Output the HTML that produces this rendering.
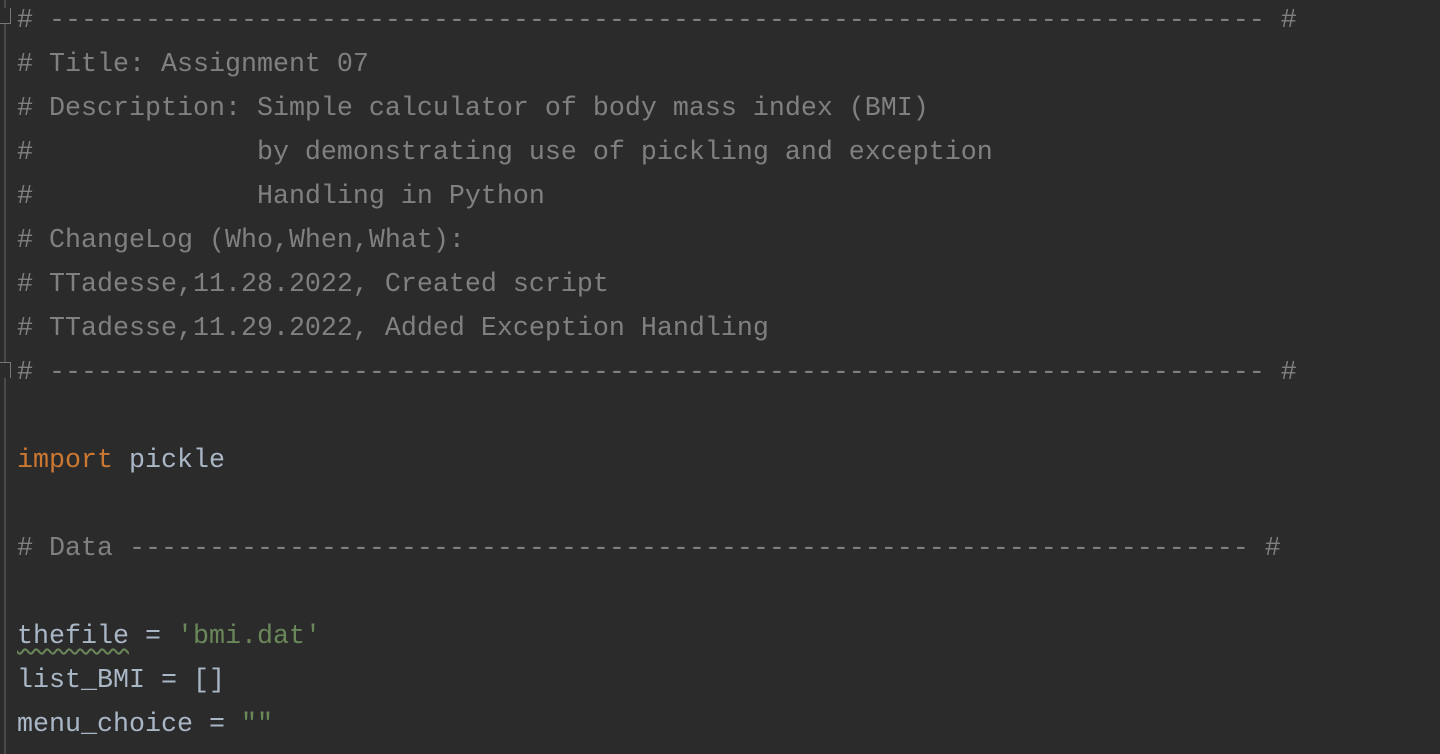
<!DOCTYPE html>
<html><head><style>
html,body{margin:0;padding:0;background:#2b2b2b;width:1440px;height:754px;overflow:hidden}
.g{position:absolute;left:4px;top:0;width:2px;height:754px;background:#4a4a4a}
pre{position:absolute;left:17px;top:-1px;margin:0;font-family:"Liberation Mono",monospace;font-size:26.67px;line-height:44px;color:#a9b7c6}
.c{color:#808080}.k{color:#cc7832}.s{color:#6a8759}
.w{text-decoration:underline wavy #6a8759;text-decoration-thickness:1.5px;text-underline-offset:5px}
.f{position:absolute;left:-1px;width:12px;height:16px;background:#2b2b2b;border:1.5px solid #777;box-sizing:border-box}
</style></head><body>
<div class="g"></div>
<div class="f" style="top:8px;border-top:none"></div>
<div class="f" style="top:362px;border-bottom:none"></div>
<pre><span class="c"># ---------------------------------------------------------------------------- #
# Title: Assignment 07
# Description: Simple calculator of body mass index (BMI)
#              by demonstrating use of pickling and exception
#              Handling in Python
# ChangeLog (Who,When,What):
# TTadesse,11.28.2022, Created script
# TTadesse,11.29.2022, Added Exception Handling
# ---------------------------------------------------------------------------- #</span>

<span class="k">import</span> pickle

<span class="c"># Data ---------------------------------------------------------------------- #</span>

<span class="w">thefile</span> = <span class="s">'bmi.dat'</span>
list_BMI = []
menu_choice = <span class="s">""</span>
</pre>
</body></html>
